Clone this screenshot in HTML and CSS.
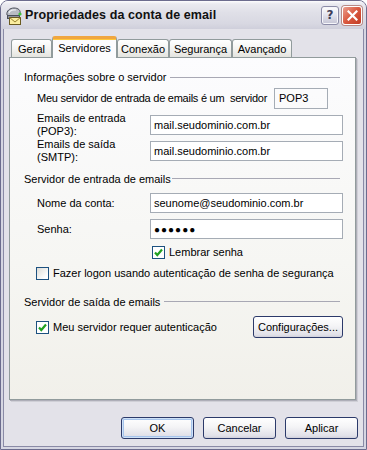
FILE: index.html
```html
<!DOCTYPE html>
<html lang="pt-BR">
<head>
    <meta charset="UTF-8">
    <title>Propriedades da conta de email</title>
    <link rel="stylesheet" href="styles.css">
</head>
<body>
    <div class="window">
        <div class="titlebar">
            <svg class="app-icon" width="17" height="18" viewBox="0 0 17 18">
                <path d="M2 8 C1 4 5 1 9 1 C13 1 16 3 15 7 C14 9 12 9 9 9 C6 9 3 9.5 2 8 Z" fill="#b9bcc4" stroke="#4a4e5a" stroke-width="1"/>
                <path d="M4 6 C5 3 8 2.5 11 3" fill="none" stroke="#eef0f4" stroke-width="1.2"/>
                <rect x="2.5" y="8.5" width="12" height="3" fill="#8d919c" stroke="#4a4e5a" stroke-width="1"/>
                <rect x="4.5" y="10.5" width="11" height="7" fill="#fbeea0" stroke="#6a5a20" stroke-width="1"/>
                <path d="M4.5 10.5 L10 15 L15.5 10.5" fill="none" stroke="#9a8430" stroke-width="1"/>
                <circle cx="15" cy="7" r="1.6" fill="#3ec43e"/>
            </svg>
            <span class="title">Propriedades da conta de email</span>
            <div class="caption-buttons">
                <span class="cap-btn help">?</span>
                <span class="cap-btn close">
                    <svg width="11" height="11" viewBox="0 0 11 11">
                        <path d="M1.5 1.5 L9.5 9.5 M9.5 1.5 L1.5 9.5" stroke="#fff" stroke-width="2.2" stroke-linecap="square"/>
                    </svg>
                </span>
            </div>
        </div>

        <div class="client">
            <div class="tabs">
                <span class="tab tab-geral">Geral</span>
                <span class="tab tab-servidores active">Servidores</span>
                <span class="tab tab-conexao">Conexão</span>
                <span class="tab tab-seguranca">Segurança</span>
                <span class="tab tab-avancado">Avançado</span>
            </div>

            <div class="panel">
                <div class="group-title"><span>Informações sobre o servidor</span><i class="rule"></i></div>
                <div class="row row-type">
                    <span class="type-label">Meu servidor de entrada de emails é um&nbsp; servidor</span>
                    <span class="static-box">POP3</span>
                </div>
                <div class="row row-in">
                    <label class="lbl" for="pop">Emails de entrada<br>(POP3):</label>
                    <input class="field" id="pop" type="text" value="mail.seudominio.com.br">
                </div>
                <div class="row row-field">
                    <label class="lbl" for="smtp">Emails de saída<br>(SMTP):</label>
                    <input class="field" id="smtp" type="text" value="mail.seudominio.com.br">
                </div>

                <div class="group-title group-2"><span>Servidor de entrada de emails</span><i class="rule"></i></div>
                <div class="row row-first">
                    <label class="lbl" for="conta">Nome da conta:</label>
                    <input class="field" id="conta" type="text" value="seunome@seudominio.com.br">
                </div>
                <div class="row row-field">
                    <label class="lbl" for="senha">Senha:</label>
                    <input class="field password" id="senha" type="text" value="●●●●●●">
                </div>
                <div class="row row-check indent-field">
                    <span class="checkbox checked"><svg width="11" height="11" viewBox="0 0 11 11"><path d="M2 5.5 L4.3 8 L9 2.5" fill="none" stroke="#21a121" stroke-width="2.2"/></svg></span>
                    <span>Lembrar senha</span>
                </div>
                <div class="row row-check row-spa">
                    <span class="checkbox"></span>
                    <span>Fazer logon usando autenticação de senha de segurança</span>
                </div>

                <div class="group-title group-3"><span>Servidor de saída de emails</span><i class="rule"></i></div>
                <div class="row row-auth">
                    <span class="checkbox checked"><svg width="11" height="11" viewBox="0 0 11 11"><path d="M2 5.5 L4.3 8 L9 2.5" fill="none" stroke="#21a121" stroke-width="2.2"/></svg></span>
                    <span>Meu servidor requer autenticação</span>
                    <button class="btn btn-settings" type="button">Configurações...</button>
                </div>
            </div>

            <div class="actions">
                <button class="btn btn-default" type="button">OK</button>
                <button class="btn" type="button">Cancelar</button>
                <button class="btn" type="button">Aplicar</button>
            </div>
        </div>
    </div>
</body>
</html>
```

FILE: styles.css
```css
body {
    margin: 0;
    font-family: "Liberation Sans", Arial, sans-serif;
    font-size: 11px;
    color: #000;
    background: #fff;
}
.window {
    width: 367px;
    height: 450px;
    box-sizing: border-box;
    border: 1px solid #6c6c8e;
    border-radius: 8px 8px 0 0;
    background: #d6d6e2;
    display: flex;
    flex-direction: column;
    overflow: hidden;
}

/* title bar */
.titlebar {
    height: 28px;
    flex: none;
    display: flex;
    align-items: center;
    padding: 0 4px 0 4px;
    background: linear-gradient(#fdfdfe 0, #eaeaf0 3px, #e0e0e8 40%, #d8d8e2 80%, #cfcfdb 100%);
}
.app-icon {
    flex: none;
    margin-right: 3px;
    margin-top: 1px;
}
.title {
    font-weight: bold;
    font-size: 12.5px;
    color: #111;
    flex: 1;
    letter-spacing: 0.1px;
}
.caption-buttons {
    display: flex;
    gap: 3px;
}
.cap-btn {
    width: 19px;
    height: 19px;
    box-sizing: border-box;
    border-radius: 3px;
    display: flex;
    align-items: center;
    justify-content: center;
}
.help {
    width: 18px;
    border: 1px solid #8c8ca8;
    background: linear-gradient(#ffffff, #e4e4ee 45%, #c4c4d4);
    box-shadow: inset 0 0 0 1px #f6f6fa;
    color: #3c3c58;
    font-family: "DejaVu Sans", sans-serif;
    font-weight: bold;
    font-size: 12px;
}
.close {
    width: 20px;
    border: 1px solid #fff;
    background: linear-gradient(135deg, #eba090, #d9583f 50%, #c23b24);
    box-shadow: 0 0 0 1px #b98a86;
}

/* client area */
.client {
    flex: 1;
    margin: 0 2px 2px 2px;
    border: 1px solid #8a8aa6;
    border-top: none;
    background: #e3e2e9;
    display: flex;
    flex-direction: column;
}

/* tabs */
.tabs {
    height: 28px;
    flex: none;
    display: flex;
    align-items: flex-end;
    padding-left: 7px;
}
.tab {
    height: 18px;
    box-sizing: border-box;
    border: 1px solid #919b9c;
    border-bottom: none;
    border-radius: 3px 3px 0 0;
    background: linear-gradient(#ffffff, #f4f4f2 50%, #e4e4df);
    display: flex;
    align-items: center;
    justify-content: center;
    padding-top: 1px;
}
.tab-geral { width: 41px; }
.tab-servidores { width: 65px; }
.tab-conexao { width: 52px; }
.tab-seguranca { width: 63px; }
.tab-avancado { width: 60px; }
.tab.active {
    position: relative;
    z-index: 2;
    height: 22px;
    margin-bottom: -1px;
    padding: 0 0 2px;
    border-top: 3px solid #f0a640;
    box-shadow: inset 0 1px 0 #ffc83c;
    background: #fcfcfe;
}

/* panel */
.panel {
    height: 343px;
    flex: none;
    box-sizing: border-box;
    margin-left: 5px;
    width: 347px;
    border: 1px solid #919b9c;
    box-shadow: 1px 1px 0 #aeaeb8, 2px 2px 0 #cfcfd6;
    background: linear-gradient(#fcfcfe, #f6f6f3 60%, #f1f0ea);
    padding: 13px 12px 0 14px;
}
.group-title {
    height: 13px;
    line-height: 13px;
    display: flex;
    align-items: center;
    white-space: nowrap;
}
.group-title .rule {
    flex: 1;
    border-top: 1px solid #a8a8b4;
    margin: 0 3px 0 4px;
}
.group-2 {
    margin-top: 12px;
}
.group-2 .rule {
    margin-left: 1px;
    margin-top: -3px;
}
.group-3 {
    margin-top: 16px;
}
.group-3 .rule {
    margin-top: -3px;
}

.row {
    display: flex;
    align-items: center;
    padding-left: 13px;
    line-height: 13px;
    white-space: nowrap;
}
.row-type {
    margin-top: 4px;
    height: 21px;
}
.type-label {
    letter-spacing: -0.25px;
}
.row-in {
    margin-top: 6px;
    height: 20px;
}
.row-field {
    margin-top: 6px;
    height: 20px;
}
.row-first {
    margin-top: 7px;
    height: 20px;
}
.lbl {
    width: 113px;
    flex: none;
}
.field {
    flex: 1;
    min-width: 0;
    height: 20px;
    box-sizing: border-box;
    border: 1px solid #a5acb5;
    padding: 0 3px;
    margin: 0;
    font-family: inherit;
    font-size: 11px;
    color: #000;
    background: #fff;
    outline: none;
}
.password {
    font-size: 10px;
    letter-spacing: 1px;
}
.static-box {
    width: 54px;
    height: 21px;
    box-sizing: border-box;
    border: 1px solid #a5acb5;
    padding: 0 4px;
    line-height: 19px;
    margin-left: auto;
    margin-right: 15px;
    flex: none;
}

/* checkboxes */
.row-check {
    height: 13px;
}
.indent-field {
    margin-top: 7px;
    padding-left: 128px;
}
.row-spa {
    margin-top: 8px;
    padding-left: 12px;
}
.checkbox {
    width: 13px;
    height: 13px;
    box-sizing: border-box;
    border: 1px solid #1c5180;
    background: linear-gradient(135deg, #dcdcd7, #ffffff 80%);
    margin-right: 4px;
    flex: none;
    display: flex;
    align-items: center;
    justify-content: center;
}
.checkbox.checked {
    background: #fff;
}
.row-auth {
    margin-top: 7px;
    height: 22px;
    padding-left: 12px;
}

/* buttons */
.btn {
    width: 73px;
    height: 22px;
    box-sizing: border-box;
    border: 1px solid #2c3a6a;
    border-radius: 3px;
    background: linear-gradient(#ffffff, #f4f4f6 45%, #e0e0e8 90%, #cfcfda);
    font-family: inherit;
    font-size: 11px;
    color: #000;
    padding: 0;
}
.btn-settings {
    width: 90px;
    margin-left: auto;
}
.btn-default {
    box-shadow: inset 0 0 0 1px #cee1f8, inset 0 0 0 2px #a6c4ec;
}
.actions {
    display: flex;
    justify-content: flex-end;
    gap: 9px;
    padding: 17px 5px 0 0;
}
```
